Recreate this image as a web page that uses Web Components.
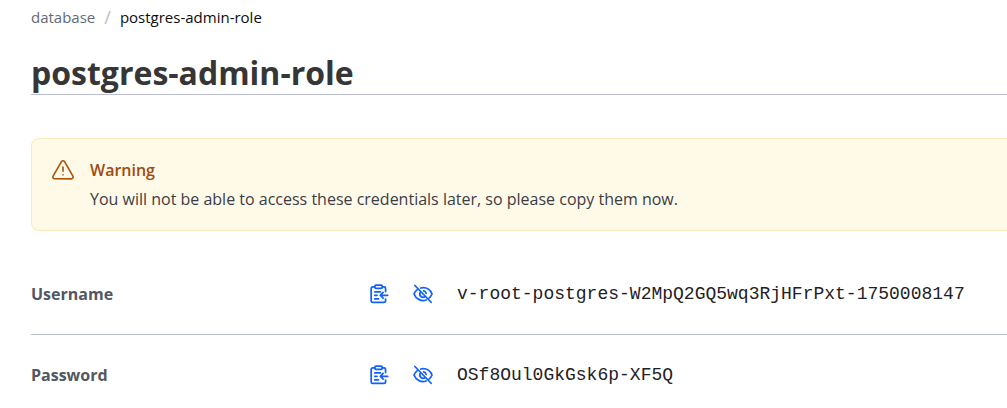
<!DOCTYPE html>
<html lang="en">
<head>
<meta charset="utf-8">
<title>postgres-admin-role</title>
<style>
body { margin: 0; background: #fff; color: #1f2124; font-family: "Open Sans", "Noto Sans", sans-serif; }
</style>
</head>
<body>
<credentials-page></credentials-page>
<script>
const define = (name, html, setup) => {
  const template = document.createElement('template');
  template.innerHTML = html;
  customElements.define(name, class extends HTMLElement {
    constructor() {
      super();
      this.attachShadow({ mode: 'open' }).append(template.content.cloneNode(true));
    }
    connectedCallback() { if (setup) setup(this, this.shadowRoot); }
  });
};

define('page-breadcrumb', `
<style>
  :host { display: block; font-size: 15px; line-height: 20px; }
  ol { display: flex; gap: 9px; margin: 0; padding: 0; list-style: none; }
  li { display: flex; gap: 9px; }
  a { color: #656a76; text-decoration: none; }
  .slash { color: #b8bcc8; font-size: 18px; }
  .current { color: #0c0c0e; }
</style>
<nav aria-label="Breadcrumb"><ol>
  <li><a href="#database"><slot name="parent"></slot></a><span class="slash">/</span></li>
  <li class="current" aria-current="page"><slot></slot></li>
</ol></nav>`);

define('page-title', `
<style>
  :host { display: block; border-bottom: 1px solid #babccf; }
  h1 { margin: 0; font-size: 32px; line-height: 42px; font-weight: 700; color: #363636; }
</style>
<h1><slot></slot></h1>`);

define('alert-banner', `
<style>
  :host { display: flex; gap: 16px; padding: 20px; border: 1px solid #fbeabf; border-right: 0;
    border-radius: 8px 0 0 8px; background: #fff9e8; font-size: 16px; }
  svg { flex: none; width: 22px; height: 22px; color: #a9560f; }
  .title { font-weight: 600; line-height: 22px; color: #9e4b10; }
  .text { line-height: 22px; margin: 7px 0 0; color: #3b3d45; }
</style>
<svg viewBox="0 0 24 24" fill="none" stroke="currentColor" stroke-width="1.8" stroke-linecap="round" stroke-linejoin="round" aria-hidden="true">
  <path d="M10.3 2.9 1.2 18.6A2 2 0 0 0 2.9 21.6h18.2a2 2 0 0 0 1.7-3L13.7 2.9a2 2 0 0 0-3.4 0Z"/>
  <path d="M12 8.8v4.6M12 17.2v.1"/>
</svg>
<div><div class="title"><slot name="title"></slot></div><p class="text"><slot></slot></p></div>`);

define('icon-button', `
<style>
  :host { display: block; }
  button { display: block; padding: 0; border: 0; background: none; color: #1060ff; cursor: pointer; }
  svg { display: block; width: 20px; height: 20px; }
  g { display: none; }
  :host([icon="copy"]) .copy, :host([icon="hide"]) .hide { display: block; }
</style>
<button type="button">
  <svg viewBox="0 0 16 16" fill="none" stroke="currentColor" stroke-width="1.4" stroke-linecap="round" stroke-linejoin="round" aria-hidden="true">
    <g class="copy">
      <path d="M4.5 2.25H3A1.25 1.25 0 0 0 1.75 3.5v10A1.25 1.25 0 0 0 3 14.75h9a1.25 1.25 0 0 0 1.25-1.25V12M10.8 2.25H12a1.25 1.25 0 0 1 1.25 1.25V6"/>
      <rect x="4.75" y=".9" width="5.8" height="2.5" rx=".8"/>
      <path d="M4.6 6.2h4.6M4.6 9h1.8M4.6 11.8h3M15 9H9M11.3 6.7 9 9l2.3 2.3"/>
    </g>
    <g class="hide">
      <path d="M1.5 1.2 14.5 14.6M6.2 3.2C11 2 14 5 15.2 8c-.5 1.2-1.3 2.3-2.2 3.1M3.2 4.7C2.1 5.6 1.2 6.8.8 8c1.6 4.2 6 6.2 9.7 4.8M6 6.4a2.6 2.6 0 0 0 3.7 3.6M8.5 5.5a2.6 2.6 0 0 1 2 2"/>
    </g>
  </svg>
</button>`, (host, root) => root.querySelector('button').setAttribute('aria-label', host.getAttribute('label')));

define('secret-row', `
<style>
  :host { display: grid; grid-template-columns: 338px 1fr; align-items: center; min-height: 80px;
    border-bottom: 1px solid #b9c0ca; }
  .label { font-size: 16px; line-height: 24px; font-weight: 700; color: #525761; }
  .value { display: flex; align-items: center; gap: 24px; }
  code { font: 18px/24px "Liberation Mono", monospace; color: #1f2124; white-space: nowrap; }
</style>
<div class="label" id="label"><slot name="label"></slot></div>
<div class="value" role="group" aria-labelledby="label">
  <icon-button icon="copy" label="Copy"></icon-button>
  <icon-button icon="hide" label="Hide value"></icon-button>
  <code><slot></slot></code>
</div>`);

define('credentials-page', `
<style>
  :host { display: block; padding: 7px 0 0 31px; overflow: hidden; }
  page-title { margin-top: 25px; }
  alert-banner { margin: 43px 0 23px; }
</style>
<main>
  <page-breadcrumb><span slot="parent">database</span>postgres-admin-role</page-breadcrumb>
  <page-title>postgres-admin-role</page-title>
  <alert-banner><span slot="title">Warning</span>You will not be able to access these credentials later, so please copy them now.</alert-banner>
  <secret-row><span slot="label">Username</span>v-root-postgres-W2MpQ2GQ5wq3RjHFrPxt-1750008147</secret-row>
  <secret-row><span slot="label">Password</span>OSf8Oul0GkGsk6p-XF5Q</secret-row>
</main>`);
</script>
</body>
</html>
